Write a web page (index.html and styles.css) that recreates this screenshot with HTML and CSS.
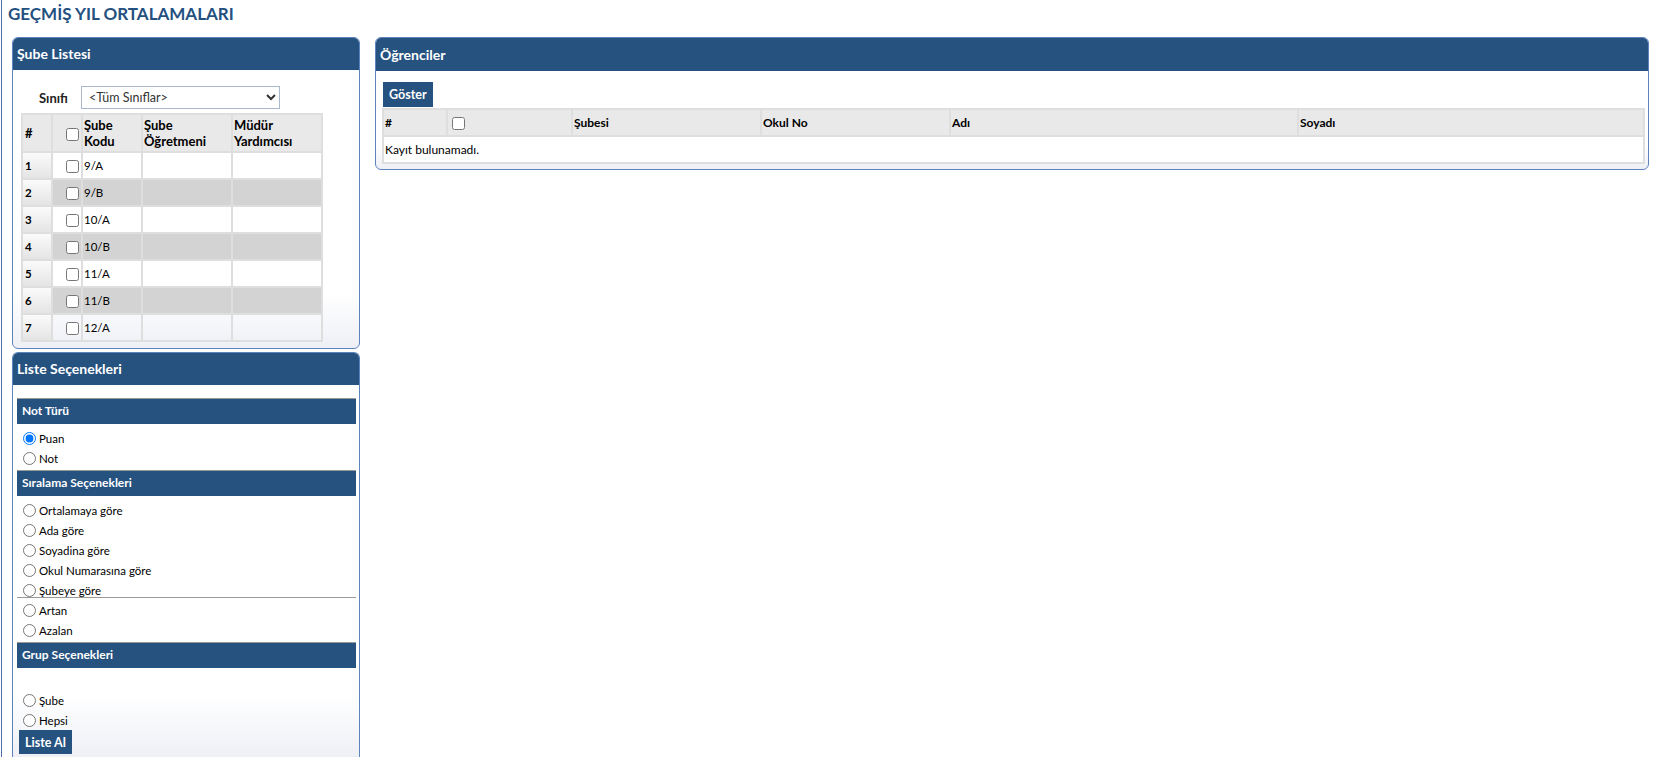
FILE: index.html
```html
<!DOCTYPE html>
<html lang="tr">
<head>
    <meta charset="UTF-8">
    <title>Geçmiş Yıl Ortalamaları</title>
    <link rel="stylesheet" href="styles.css">
</head>
<body>
<div class="page">
    <h1 class="page-title">GEÇMİŞ YIL ORTALAMALARI</h1>
    <div class="layout">
        <div class="left-col">
            <div class="panel panel-sube">
                <div class="panel-header">Şube Listesi</div>
                <div class="panel-body sube-body">
                    <div class="filter-row">
                        <label class="filter-label">Sınıfı</label>
                        <select class="filter-select">
                            <option>&lt;Tüm Sınıflar&gt;</option>
                        </select>
                    </div>
                    <table class="grid sube-grid">
                        <colgroup>
                            <col class="w-no"><col class="w-chk"><col class="w-kod"><col class="w-ogr"><col class="w-mdr">
                        </colgroup>
                        <thead>
                            <tr>
                                <th class="c-no">#</th>
                                <th class="c-chk"><input type="checkbox"></th>
                                <th>Şube<br>Kodu</th>
                                <th>Şube<br>Öğretmeni</th>
                                <th>Müdür<br>Yardımcısı</th>
                            </tr>
                        </thead>
                        <tbody>
                            <tr><th class="c-no">1</th><td class="c-chk"><input type="checkbox"></td><td>9/A</td><td></td><td></td></tr>
                            <tr class="alt"><th class="c-no">2</th><td class="c-chk"><input type="checkbox"></td><td>9/B</td><td></td><td></td></tr>
                            <tr><th class="c-no">3</th><td class="c-chk"><input type="checkbox"></td><td>10/A</td><td></td><td></td></tr>
                            <tr class="alt"><th class="c-no">4</th><td class="c-chk"><input type="checkbox"></td><td>10/B</td><td></td><td></td></tr>
                            <tr><th class="c-no">5</th><td class="c-chk"><input type="checkbox"></td><td>11/A</td><td></td><td></td></tr>
                            <tr class="alt"><th class="c-no">6</th><td class="c-chk"><input type="checkbox"></td><td>11/B</td><td></td><td></td></tr>
                            <tr><th class="c-no">7</th><td class="c-chk"><input type="checkbox"></td><td>12/A</td><td></td><td></td></tr>
                        </tbody>
                    </table>
                </div>
            </div>

            <div class="panel panel-options">
                <div class="panel-header">Liste Seçenekleri</div>
                <div class="panel-body options-body">
                    <div class="section-bar">Not Türü</div>
                    <div class="opt-group">
                        <label class="opt"><input type="radio" name="tur" checked>Puan</label>
                        <label class="opt"><input type="radio" name="tur">Not</label>
                    </div>

                    <div class="section-bar">Sıralama Seçenekleri</div>
                    <div class="opt-group">
                        <label class="opt"><input type="radio" name="sira">Ortalamaya göre</label>
                        <label class="opt"><input type="radio" name="sira">Ada göre</label>
                        <label class="opt"><input type="radio" name="sira">Soyadina göre</label>
                        <label class="opt"><input type="radio" name="sira">Okul Numarasına göre</label>
                        <label class="opt"><input type="radio" name="sira">Şubeye göre</label>
                    </div>
                    <div class="divider"></div>
                    <div class="opt-group after-divider">
                        <label class="opt"><input type="radio" name="yon">Artan</label>
                        <label class="opt"><input type="radio" name="yon">Azalan</label>
                    </div>

                    <div class="section-bar">Grup Seçenekleri</div>
                    <div class="opt-group grup-group">
                        <label class="opt"><input type="radio" name="grup">Şube</label>
                        <label class="opt"><input type="radio" name="grup">Hepsi</label>
                    </div>
                    <button class="btn">Liste Al</button>
                </div>
            </div>
        </div>

        <div class="panel panel-students">
            <div class="panel-header">Öğrenciler</div>
            <div class="panel-body students-body">
                <button class="btn">Göster</button>
                <table class="grid students-grid">
                    <colgroup>
                        <col class="s-no"><col class="s-chk"><col class="s-sube"><col class="s-okul"><col class="s-adi"><col>
                    </colgroup>
                    <thead>
                        <tr>
                            <th>#</th>
                            <th class="s-chk-cell"><input type="checkbox"></th>
                            <th>Şubesi</th>
                            <th>Okul No</th>
                            <th>Adı</th>
                            <th>Soyadı</th>
                        </tr>
                    </thead>
                    <tbody>
                        <tr><td colspan="6" class="empty">Kayıt bulunamadı.</td></tr>
                    </tbody>
                </table>
            </div>
        </div>
    </div>
</div>
</body>
</html>
```

FILE: styles.css
```css
* {
    box-sizing: border-box;
}

body {
    margin: 0;
    height: 100vh;
    background: #fff;
    font-family: Lato, 'Noto Sans', sans-serif;
    font-size: 12px;
    color: #000;
    overflow: hidden;
}

.page {
    margin-left: 1px;
    padding-left: 10px;
    border-left: 1px solid #4b6fa6;
    height: 100vh;
    overflow: hidden;
}

.page-title {
    margin: 0 0 0 -4px;
    padding-top: 4px;
    height: 37px;
    line-height: 20px;
    font-size: 17px;
    font-weight: bold;
    color: #24507f;
}

.layout {
    display: flex;
    align-items: flex-start;
    gap: 15px;
}

.left-col {
    width: 348px;
    display: flex;
    flex-direction: column;
    gap: 3px;
}

.panel {
    border: 1px solid #5d83bd;
    border-radius: 6px;
    background: linear-gradient(to bottom, #fff 82%, #eef0f6);
    overflow: hidden;
}

.panel-header {
    height: 32px;
    padding: 0 4px;
    line-height: 32px;
    background: #26527f;
    color: #fff;
    font-weight: bold;
    font-size: 14px;
}

/* Şube listesi */
.sube-body {
    padding: 16px 0 6px 8px;
}

.filter-row {
    display: flex;
    align-items: center;
    margin-left: 18px;
    margin-bottom: 4px;
}

.filter-label {
    width: 42px;
    font-weight: bold;
    font-size: 13px;
    color: #222;
}

.filter-select {
    width: 199px;
    height: 23px;
    border: 1px solid #a9b8cf;
    border-radius: 0;
    background: #fff;
    font-family: inherit;
    font-size: 12.5px;
    color: #333;
    padding: 0 3px;
}

.grid {
    border-collapse: collapse;
    border: 2px solid #dedede;
    table-layout: fixed;
}

.grid th,
.grid td {
    border: 2px solid #dedede;
    padding: 0 1px;
    text-align: left;
    vertical-align: middle;
}

.grid thead th {
    background: #e9e9e9;
    font-weight: bold;
}

.sube-grid {
    width: 300px;
}

.sube-grid .w-no { width: 30px; }
.sube-grid .w-chk { width: 30px; }
.sube-grid .w-kod { width: 60px; }
.sube-grid .w-ogr { width: 90px; }
.sube-grid .w-mdr { width: 90px; }

.sube-grid thead th {
    height: 38px;
    font-size: 13px;
    line-height: 16px;
}

.sube-grid tbody td,
.sube-grid tbody th {
    height: 27px;
    font-size: 11.5px;
}

.sube-grid .c-no {
    padding-left: 2px;
}

.sube-grid .c-chk {
    text-align: right;
    padding-right: 2px;
}

.sube-grid tbody th.c-no {
    background: linear-gradient(to bottom, #fbfbfb, #e4e4e4);
    font-weight: bold;
}

.sube-grid tbody tr.alt td {
    background: #d3d3d3;
}

.grid input[type="checkbox"] {
    width: 13px;
    height: 13px;
    margin: 0;
    vertical-align: middle;
}

/* Liste seçenekleri */
.panel-options {
    border-bottom: none;
    border-radius: 6px 6px 0 0;
}

.options-body {
    padding: 13px 3px 0 4px;
    height: 372px;
    background: linear-gradient(to bottom, #fff 310px, #eef0f6);
}

.section-bar {
    height: 26px;
    line-height: 24px;
    padding: 0 5px;
    border-top: 1px solid #9a9a9a;
    background: #26527f;
    color: #fff;
    font-weight: bold;
    font-size: 12px;
}

.opt-group {
    padding: 4px 0 2px;
}

.opt-group.after-divider {
    padding-top: 2px;
}

.opt-group.grup-group {
    padding: 22px 0 0;
}

.opt {
    display: flex;
    align-items: center;
    height: 20px;
    font-size: 11.5px;
    color: #000;
}

.opt input {
    margin: 0 3px 0 6px;
    width: 13px;
    height: 13px;
}

.divider {
    border-top: 1px solid #9a9a9a;
    margin-top: -5px;
    position: relative;
}

.btn {
    display: block;
    height: 24px;
    padding: 0 6px;
    border: none;
    background: #26527f;
    color: #fff;
    font-family: inherit;
    font-weight: bold;
    font-size: 12.5px;
    cursor: pointer;
}

.options-body .btn {
    margin-left: 2px;
}

/* Öğrenciler */
.panel-students {
    flex: 1;
    margin-right: 7px;
}

.panel-students .panel-header {
    height: 33px;
    line-height: 33px;
}

.students-body {
    padding: 11px 3px 5px 6px;
}

.students-body .btn {
    height: 25px;
    margin-left: 1px;
    margin-bottom: 1px;
}

.students-grid {
    width: 100%;
}

.students-grid .s-no { width: 64px; }
.students-grid .s-chk { width: 125px; }
.students-grid .s-sube { width: 189px; }
.students-grid .s-okul { width: 189px; }
.students-grid .s-adi { width: 348px; }

.students-grid thead th {
    height: 27px;
    font-size: 12px;
}

.students-grid .s-chk-cell {
    padding-left: 4px;
}

.students-grid .empty {
    height: 27px;
    background: #fff;
}
```
